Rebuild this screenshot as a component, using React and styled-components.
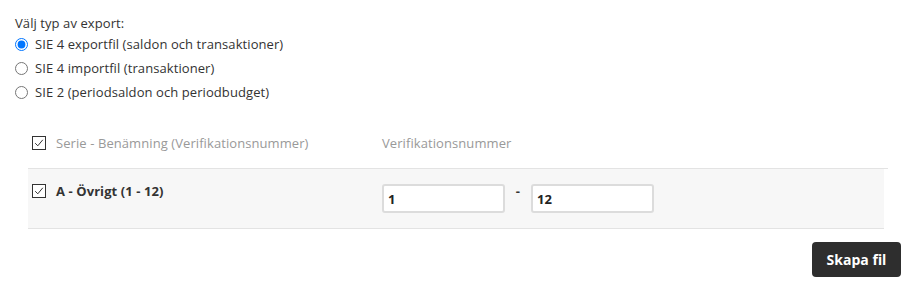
import React, { useState } from 'react';
import styled, { createGlobalStyle } from 'styled-components';

const GlobalStyle = createGlobalStyle`
	body {
		margin: 0;
		background: #ffffff;
		font-family: "Open Sans", "Liberation Sans", sans-serif;
		font-size: 13px;
		letter-spacing: 0.08px;
		color: #333333;
	}
`;

const Page = styled.div`
	display: flex;
	flex-direction: column;
	padding: 15px 13px 13px 15px;
`;
const Question = styled.div`
	line-height: 17px;
`;
const RadioList = styled.div`
	display: flex;
	flex-direction: column;
	margin-bottom: 14px;
`;
const RadioRow = styled.label`
	display: flex;
	align-items: center;
	gap: 7px;
	height: 24px;
	cursor: pointer;
	input {
		margin: 0;
		width: 13px;
		height: 13px;
	}
`;
const Table = styled.div`
	display: flex;
	flex-direction: column;
	margin: 0 13px 0 13px;
`;
const HeaderRow = styled.div`
	display: grid;
	grid-template-columns: 354px 1fr;
	align-items: center;
	height: 50px;
	border-bottom: 1px solid #e3e3e3;
	color: #999999;
`;
const DataRow = styled.div`
	display: grid;
	grid-template-columns: 354px 1fr;
	align-items: start;
	height: 60px;
	box-sizing: border-box;
	padding-top: 15px;
	margin-right: 4px;
	background: #f7f7f7;
	border-bottom: 1px solid #e3e3e3;
`;
const NameCell = styled.div`
	display: flex;
	align-items: center;
	gap: 10px;
	padding-left: 4px;
	font-weight: ${p => (p.bold ? 700 : 400)};
	height: ${p => (p.bold ? '14px' : 'auto')};
`;
const RangeCell = styled.div`
	display: flex;
	align-items: flex-start;
`;
const NumberInput = styled.input`
	width: 123px;
	height: 29px;
	box-sizing: border-box;
	border: 2px solid #dcdcdc;
	border-radius: 3px;
	background: #ffffff;
	padding: 0 4px;
	font-family: "Open Sans", "Liberation Sans", sans-serif;
	font-size: 13px;
	font-weight: 700;
	color: #222222;
	outline: none;
`;
const Dash = styled.span`
	width: 26px;
	text-align: center;
	font-weight: 700;
	line-height: 15px;
`;
const Footer = styled.div`
	display: flex;
	justify-content: flex-end;
	margin-top: 13px;
`;
const Button = styled.button`
	width: 89px;
	height: 35px;
	border: none;
	border-radius: 4px;
	background: #2e2e2e;
	color: #ffffff;
	font-family: "Open Sans", "Liberation Sans", sans-serif;
	font-size: 14px;
	font-weight: 700;
	cursor: pointer;
`;

const Check = () => (
	<svg width="14" height="14" viewBox="0 0 14 14">
		<rect x="0.5" y="0.5" width="13" height="13" fill="#ffffff" stroke="#333333" />
		<path d="M3.2 7.2 L5.8 9.8 L10.8 3.8" fill="none" stroke="#333333" strokeWidth="1" />
	</svg>
);

const options = [
	'SIE 4 exportfil (saldon och transaktioner)',
	'SIE 4 importfil (transaktioner)',
	'SIE 2 (periodsaldon och periodbudget)',
];

const App = () => {
	const [type, setType] = useState(0);

	return (
		<Page>
			<GlobalStyle />
			<Question>Välj typ av export:</Question>
			<RadioList>
				{options.map((opt, i) => (
					<RadioRow key={opt}>
						<input type="radio" name="type" checked={type === i} onChange={() => setType(i)} />
						{opt}
					</RadioRow>
				))}
			</RadioList>
			<Table>
				<HeaderRow>
					<NameCell><Check />Serie - Benämning (Verifikationsnummer)</NameCell>
					<div>Verifikationsnummer</div>
				</HeaderRow>
				<DataRow>
					<NameCell bold><Check />A - Övrigt (1 - 12)</NameCell>
					<RangeCell>
						<NumberInput defaultValue="1" />
						<Dash>-</Dash>
						<NumberInput defaultValue="12" />
					</RangeCell>
				</DataRow>
			</Table>
			<Footer>
				<Button>Skapa fil</Button>
			</Footer>
		</Page>
	);
};

export default App;
